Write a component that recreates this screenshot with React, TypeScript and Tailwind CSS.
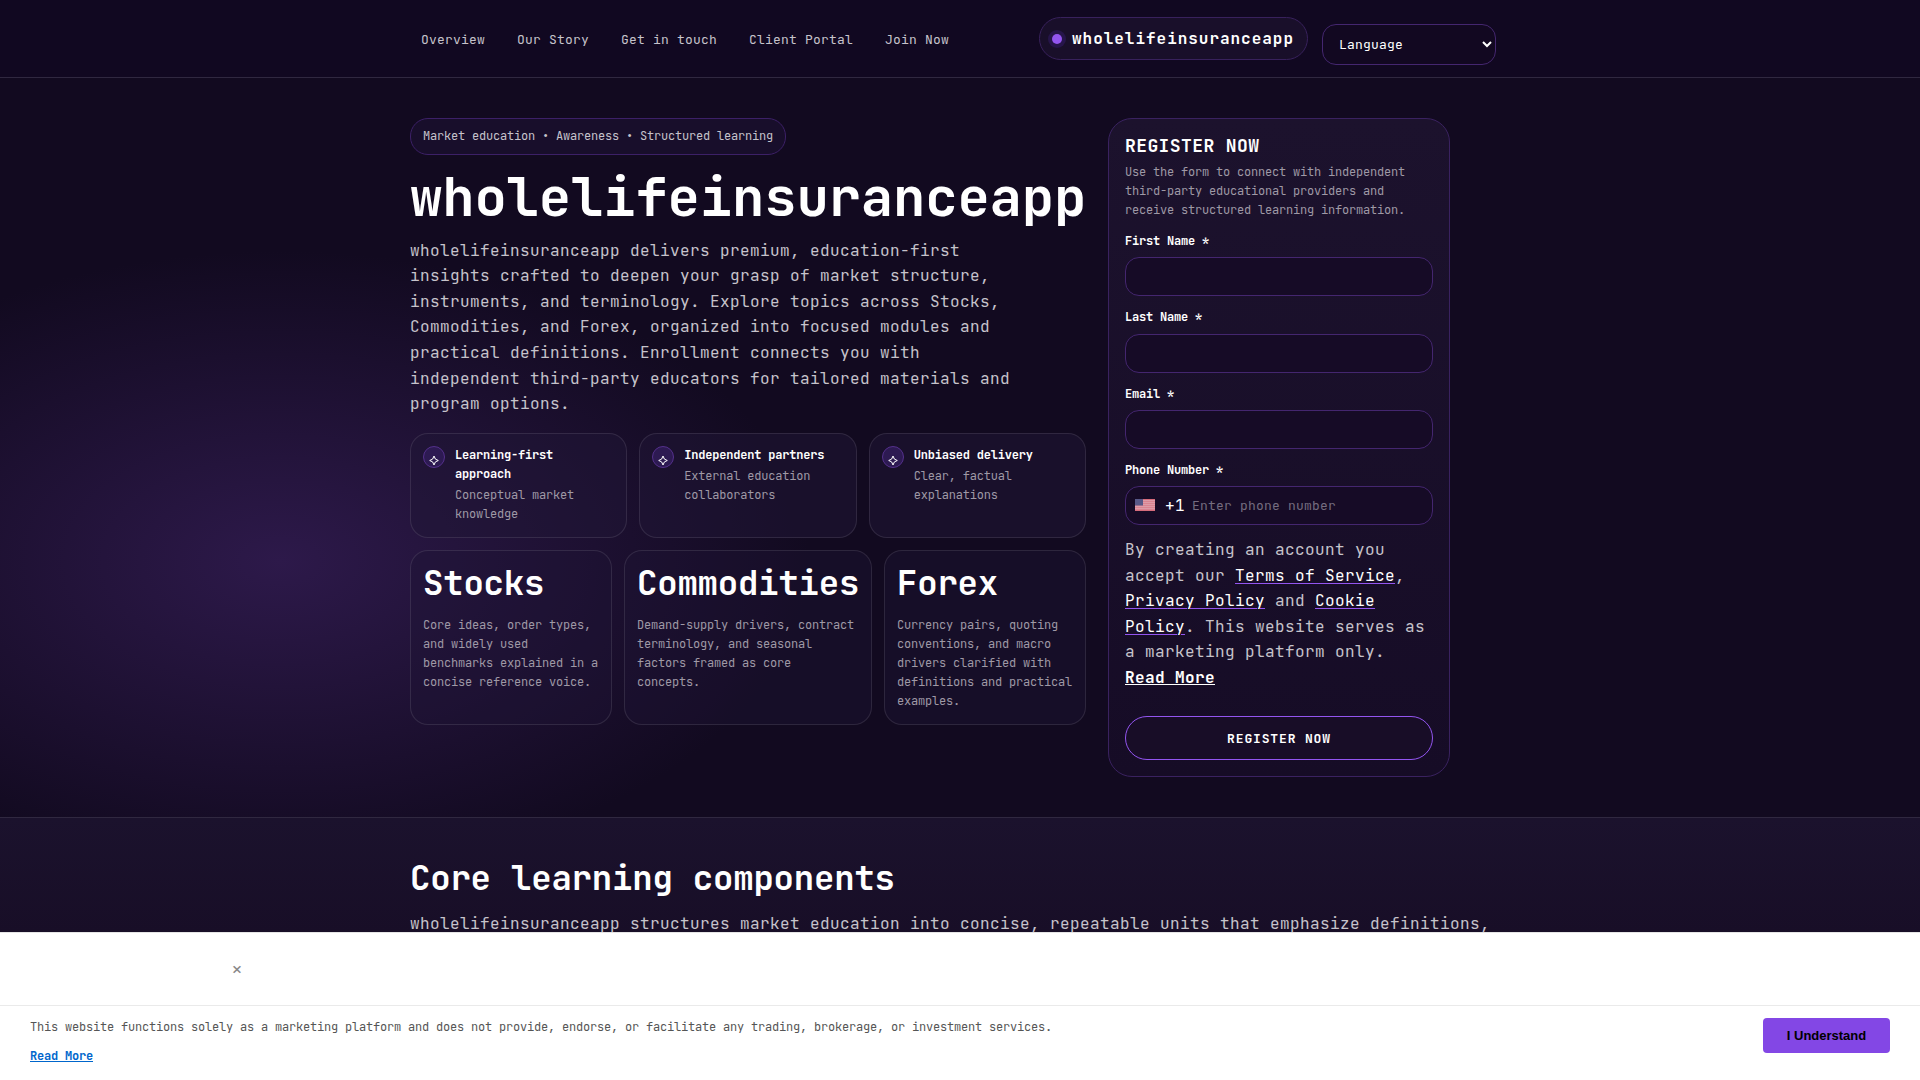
import type { ReactNode } from 'react'

const navLinks = ['Overview', 'Our Story', 'Get in touch', 'Client Portal', 'Join Now']

const features = [
  { title: 'Learning-first approach', text: 'Conceptual market knowledge' },
  { title: 'Independent partners', text: 'External education collaborators' },
  { title: 'Unbiased delivery', text: 'Clear, factual explanations' },
]

const markets = [
  { title: 'Stocks', text: 'Core ideas, order types, and widely used benchmarks explained in a concise reference voice.' },
  { title: 'Commodities', text: 'Demand-supply drivers, contract terminology, and seasonal factors framed as core concepts.' },
  { title: 'Forex', text: 'Currency pairs, quoting conventions, and macro drivers clarified with definitions and practical examples.' },
]

function Field({ label, children }: { label: string; children?: ReactNode }) {
  return (
    <div className="mb-3">
      <div className="mb-1.5 text-xs leading-[19.2px] font-semibold tracking-[-0.2px] text-white">{label}</div>
      <div className="flex h-[39px] items-center rounded-[14px] border border-[#44266f] bg-[#160b26] px-[9px]">
        {children}
      </div>
    </div>
  )
}

function Flag() {
  return (
    <svg width="20" height="12" viewBox="0 0 20 12" className="shrink-0">
      <rect width="20" height="12" fill="#d66c7b" />
      {[1, 3, 5, 7, 9].map((y) => (
        <rect key={y} y={y + 0.4} width="20" height="0.9" fill="#e3bcc6" />
      ))}
      <rect width="8" height="6.5" fill="#575887" />
    </svg>
  )
}

function PolicyLink({ children }: { children: ReactNode }) {
  return <a className="text-white underline decoration-[#9355f0] decoration-1 underline-offset-2">{children}</a>
}

export default function App() {
  return (
    <div className="flex h-[1080px] w-full flex-col overflow-hidden bg-[#120a20] font-['JetBrains_Mono','DejaVu_Sans_Mono',monospace] text-base leading-[25.6px] tracking-[0.4px] text-[#c6c3cb]">
      <header className="flex h-[78px] shrink-0 justify-center border-b border-[#302840] bg-[#110821]">
        <div className="flex w-[1100px] items-start">
          <nav className="flex gap-8 pt-[30px] pl-[11px] text-[13px] leading-[20.8px] tracking-[0.2px] whitespace-nowrap">
            {navLinks.map((link) => (
              <a key={link}>{link}</a>
            ))}
          </nav>
          <div className="mt-[17px] ml-auto flex h-[43px] w-[269px] items-center gap-[10px] rounded-[22px] border border-[#38215c] bg-[#190f2a] pl-3">
            <span className="size-[10px] shrink-0 rounded-full bg-[#9355f0] shadow-[0_0_0_4px_#26154a]" />
            <span className="font-bold tracking-[0.97px] whitespace-nowrap text-white">wholelifeinsuranceapp</span>
          </div>
          <div className="mt-6 mr-[14px] ml-[14px] flex h-[41px] w-[174px] items-center justify-between rounded-[14px] border border-[#44266f] bg-[#120821] pr-[3px] pl-4 text-[13px] tracking-[0.2px] text-white">
            Language
            <svg width="10" height="7" viewBox="0 0 10 7" fill="none" stroke="#fff" strokeWidth="2">
              <path d="M1 1l4 4 4-4" />
            </svg>
          </div>
        </div>
      </header>

      <main className="flex h-[740px] shrink-0 justify-center border-b border-[#302840] bg-[radial-gradient(530px_310px_at_280px_483px,#2d194a_0%,#120a20_100%)] pt-10">
        <div className="flex w-[1100px] items-start gap-[22px]">
          <div className="w-[676px] shrink-0">
            <div className="flex h-[37px] w-[376px] items-center rounded-[18px] border border-[#3c2067] bg-[#180e2b] px-3 pb-px text-xs tracking-[-0.2px] whitespace-nowrap">
              Market education • Awareness • Structured learning
            </div>
            <h1 className="mt-[14px] text-[54px] leading-[56.7px] font-bold tracking-[-0.2px] whitespace-nowrap text-white">
              wholelifeinsuranceapp
            </h1>
            <p className="mt-3 w-[620px]">
              wholelifeinsuranceapp delivers premium, education-first insights crafted to deepen your grasp of market
              structure, instruments, and terminology. Explore topics across Stocks, Commodities, and Forex, organized
              into focused modules and practical definitions. Enrollment connects you with independent third-party
              educators for tailored materials and program options.
            </p>

            <div className="mt-4 grid grid-cols-3 gap-3 text-xs leading-[19.2px] tracking-[-0.2px]">
              {features.map((f) => (
                <div key={f.title} className="flex h-[105px] gap-[10px] rounded-[18px] border border-white/10 bg-[#1f1535]/50 p-3">
                  <span className="flex size-[22px] shrink-0 items-center justify-center rounded-full border border-[#54308c] bg-[#2d1a52] text-white">
                    <svg width="10" height="11" viewBox="0 0 10 11" fill="none" stroke="#fff" className="mt-[7px]">
                      <path d="M5 1Q5.6 4.9 9.3 5.5 5.6 6.1 5 10 4.4 6.1.7 5.5 4.4 4.9 5 1z" />
                    </svg>
                  </span>
                  <div>
                    <div className="font-bold text-white">{f.title}</div>
                    <div className="mt-0.5 text-[#9f99a6]">{f.text}</div>
                  </div>
                </div>
              ))}
            </div>

            <div className="mt-3 grid h-[175px] grid-cols-[202px_248px_202px] gap-3">
              {markets.map((m) => (
                <div key={m.title} className="rounded-[18px] border border-white/10 bg-[#1f1535]/40 p-3">
                  <h2 className="mb-3 text-[34px] leading-[40.8px] font-bold tracking-[-0.2px] text-white">{m.title}</h2>
                  <p className="text-xs leading-[19.2px] tracking-[-0.2px] text-[#9f99a6]">{m.text}</p>
                </div>
              ))}
            </div>
          </div>

          <div className="flex h-[659px] w-[342px] shrink-0 flex-col rounded-3xl border border-[#3a2260] bg-linear-to-b from-[#1c122d] to-[#160c26] px-4 pt-4">
            <h3 className="mb-[5px] text-lg leading-[22.5px] font-bold tracking-[0.4px] text-white">REGISTER NOW</h3>
            <p className="mb-3 text-xs leading-[19.2px] tracking-[-0.2px] text-[#9f99a6]">
              Use the form to connect with independent third-party educational providers and receive structured
              learning information.
            </p>
            <Field label="First Name *" />
            <Field label="Last Name *" />
            <Field label="Email *" />
            <Field label="Phone Number *">
              <Flag />
              <span className="ml-[10px] text-white">+1</span>
              <span className="ml-[7px] text-[13px] tracking-[0.2px] text-[#756d80]">Enter phone number</span>
            </Field>
            <p className="-mr-2">
              By creating an account you
              <br />
              accept our <PolicyLink>Terms of Service</PolicyLink>,
              <br />
              <PolicyLink>Privacy Policy</PolicyLink> and <PolicyLink>Cookie</PolicyLink>
              <br />
              <PolicyLink>Policy</PolicyLink>. This website serves as
              <br />a marketing platform only.
              <br />
              <a className="font-bold text-white underline underline-offset-1">Read More</a>
            </p>
            <button className="mt-auto mb-4 h-11 shrink-0 rounded-[22px] border border-[#9355f0] bg-[#180d27] pt-px text-[13px] font-bold tracking-[0.85px] text-white">
              REGISTER NOW
            </button>
          </div>
        </div>
      </main>

      <section className="flex h-[114px] shrink-0 justify-center overflow-hidden bg-linear-to-b from-[#1b122d] to-[#180e27] pt-10">
        <div className="w-[1100px]">
          <h2 className="mb-3 text-[34px] leading-[40.8px] font-bold tracking-[-0.2px] text-white">
            Core learning components
          </h2>
          <p className="whitespace-nowrap">
            wholelifeinsuranceapp structures market education into concise, repeatable units that emphasize definitions,
          </p>
        </div>
      </section>

      <footer className="flex grow flex-col border-t border-[#e5e5e5] bg-white text-xs tracking-[-0.2px]">
        <div className="h-[73px] border-b border-[#eaeaea] pt-6 pl-[231px] text-xl leading-[25.6px] text-[#888]">×</div>
        <div className="flex items-start justify-between pt-3 pr-[30px] pl-[30px]">
          <div>
            <p className="leading-[19.2px] text-[#555]">
              This website functions solely as a marketing platform and does not provide, endorse, or facilitate any
              trading, brokerage, or investment services.
            </p>
            <a className="mt-[10px] block w-fit leading-[19.2px] font-bold text-[#0066cc] underline">Read More</a>
          </div>
          <button className="h-[35px] w-[127px] rounded bg-[#8347e5] font-['Liberation_Sans',sans-serif] text-[13px] font-bold tracking-normal text-black">
            I Understand
          </button>
        </div>
      </footer>
    </div>
  )
}
